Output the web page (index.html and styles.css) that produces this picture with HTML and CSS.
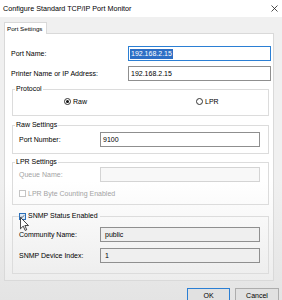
FILE: index.html
```html
<!DOCTYPE html>
<html lang="en">
<head>
    <meta charset="UTF-8">
    <title>Configure Standard TCP/IP Port Monitor</title>
    <link rel="stylesheet" href="styles.css">
</head>
<body>
<div class="window">
    <div class="titlebar">
        <span class="title">Configure Standard TCP/IP Port Monitor</span>
        <svg class="close" viewBox="0 0 7 7"><path d="M0.5 0.5L6.5 6.5M6.5 0.5L0.5 6.5" stroke="#222" stroke-width="0.8" fill="none"/></svg>
    </div>
    <div class="tabs">
        <div class="tab">Port Settings</div>
    </div>
    <div class="panel">
        <div class="row">
            <span class="label">Port Name:</span>
            <div class="input focus"><span class="sel">192.168.2.15</span></div>
        </div>
        <div class="row">
            <span class="label">Printer Name or IP Address:</span>
            <div class="input">192.168.2.15</div>
        </div>

        <fieldset class="group protocol">
            <legend>Protocol</legend>
            <div class="radios">
                <span class="opt raw"><span class="radio on"></span>Raw</span>
                <span class="opt"><span class="radio"></span>LPR</span>
            </div>
        </fieldset>

        <fieldset class="group raw-set">
            <legend>Raw Settings</legend>
            <div class="frow">
                <span class="flabel">Port Number:</span>
                <div class="input small">9100</div>
            </div>
        </fieldset>

        <fieldset class="group lpr-set">
            <legend>LPR Settings</legend>
            <div class="frow">
                <span class="flabel off">Queue Name:</span>
                <div class="input small disabled"></div>
            </div>
            <div class="check-row off">
                <span class="check dim"></span>LPR Byte Counting Enabled
            </div>
        </fieldset>

        <fieldset class="group snmp">
            <legend class="check-legend">
                <span class="check on">
                    <svg viewBox="0 0 7 7"><path d="M1.2 3.6L2.8 5.2L5.8 1.8" stroke="#1a1a1a" stroke-width="0.9" fill="none"/></svg>
                </span>SNMP Status Enabled
            </legend>
            <div class="frow">
                <span class="flabel">Community Name:</span>
                <div class="input small ro">public</div>
            </div>
            <div class="frow">
                <span class="flabel">SNMP Device Index:</span>
                <div class="input small ro">1</div>
            </div>
        </fieldset>
    </div>
    <div class="buttons">
        <button class="btn default">OK</button>
        <button class="btn">Cancel</button>
    </div>

    <svg class="cursor" viewBox="0 0 12 19"><path d="M0.5 0.5L0.5 16L4.3 12.4L6.9 18.2L9 17.3L6.5 11.6L11.4 11.6Z" fill="#fff" stroke="#000" stroke-width="1"/></svg>
</div>
</body>
</html>
```

FILE: styles.css
```css
*{
    box-sizing: border-box;
}
body{
    margin: 0;
    background-color: #f0f0f0;
    font-family: "Liberation Sans", Arial, sans-serif;
    font-size: 7px;
    color: #000;
}
.window{
    position: relative;
    width: 282px;
    height: 300px;
    overflow: hidden;
    background: linear-gradient(#f0f0f0 60%, #e4e4e4 100%);
}
.titlebar{
    height: 17px;
    background-color: #fff;
    display: flex;
    align-items: center;
    justify-content: space-between;
    padding: 0 4px 0 3px;
}
.title{
    font-size: 7.2px;
}
.close{
    width: 7px;
    height: 7px;
}
.tabs{
    display: flex;
    padding: 5px 0 0 4px;
}
.tab{
    position: relative;
    width: 43px;
    height: 12px;
    margin-bottom: -1px;
    padding-left: 2px;
    line-height: 11px;
    font-size: 6.2px;
    background-color: #fff;
    border: 1px solid #d9d9d9;
    border-bottom: none;
}
.panel{
    margin: 0 8px 0 4px;
    padding: 12px 2px 6px 6px;
    background: linear-gradient(#fff 60%, #ededed 100%);
    border: 1px solid #d9d9d9;
}
.row{
    display: flex;
    align-items: center;
    height: 15px;
}
.row + .row{
    margin-top: 5px;
}
.label{
    flex: 1;
}
.input{
    width: 143px;
    height: 15px;
    padding-left: 2px;
    line-height: 13px;
    border: 1px solid #8f8f8f;
    background-color: #fff;
    white-space: nowrap;
}
.input.focus{
    border-color: #2b7fd4;
    padding-left: 1px;
}
.sel{
    display: inline-block;
    line-height: 10px;
    padding: 0 1px;
    background-color: #2d6fc5;
    color: #fff;
}
.input.small{
    width: 160px;
}
.input.disabled{
    border-color: #d4d4d4;
    background-color: #f8f8f8;
}
.input.ro{
    background-color: #efefef;
    padding-left: 4px;
}
.group{
    margin: 0 2px 0 1px;
    padding: 0 6px;
    min-width: 0;
    border: 1px solid #dcdcdc;
}
.group legend{
    margin-left: -4px;
    padding: 0 1px;
    line-height: 10px;
}
.protocol{
    margin-top: 3px;
    padding-top: 2px;
    padding-bottom: 9px;
}
.raw-set{
    margin-top: 4px;
    padding-top: 2px;
    padding-bottom: 6px;
}
.lpr-set{
    margin-top: 3px;
    padding-bottom: 6px;
}
.snmp{
    margin-top: 6px;
    padding-top: 6px;
    padding-bottom: 10px;
}
.radios{
    display: flex;
    align-items: center;
    height: 10px;
    padding-left: 45px;
}
.opt{
    display: flex;
    align-items: center;
}
.opt.raw{
    width: 132px;
}
.radio{
    width: 7px;
    height: 7px;
    margin-right: 2px;
    border: 1px solid #333;
    border-radius: 50%;
    display: flex;
    align-items: center;
    justify-content: center;
}
.radio.on::after{
    content: "";
    width: 3px;
    height: 3px;
    border-radius: 50%;
    background-color: #111;
}
.frow{
    display: flex;
    align-items: center;
    height: 15px;
}
.frow + .frow{
    margin-top: 6px;
}
.flabel{
    width: 81px;
}
.off{
    color: #a3a3a3;
}
.check-row{
    display: flex;
    align-items: center;
    height: 10px;
    margin-top: 6px;
}
.check{
    width: 7px;
    height: 7px;
    margin-right: 2px;
    border: 1px solid #333;
    background-color: #fff;
    display: inline-block;
}
.check.dim{
    border-color: #c4c4c4;
}
.check.on{
    border-color: #2b6fb8;
    background-color: #dbe9f8;
}
.check.on svg{
    display: block;
    width: 5px;
    height: 5px;
}
.group .check-legend{
    display: flex;
    align-items: center;
    margin-left: 0;
    padding: 0 2px 0 0;
}
.buttons{
    display: flex;
    justify-content: flex-end;
    gap: 5px;
    margin-top: 7px;
    padding-right: 3px;
}
.btn{
    width: 44px;
    height: 14px;
    padding: 0;
    font-family: "Liberation Sans", Arial, sans-serif;
    font-size: 7px;
    color: #000;
    background-color: #e1e1e1;
    border: 1px solid #adadad;
}
.btn.default{
    width: 43px;
    border-color: #2b7fd4;
}
.cursor{
    position: absolute;
    left: 20px;
    top: 217px;
    width: 9px;
    height: 14px;
}
```
